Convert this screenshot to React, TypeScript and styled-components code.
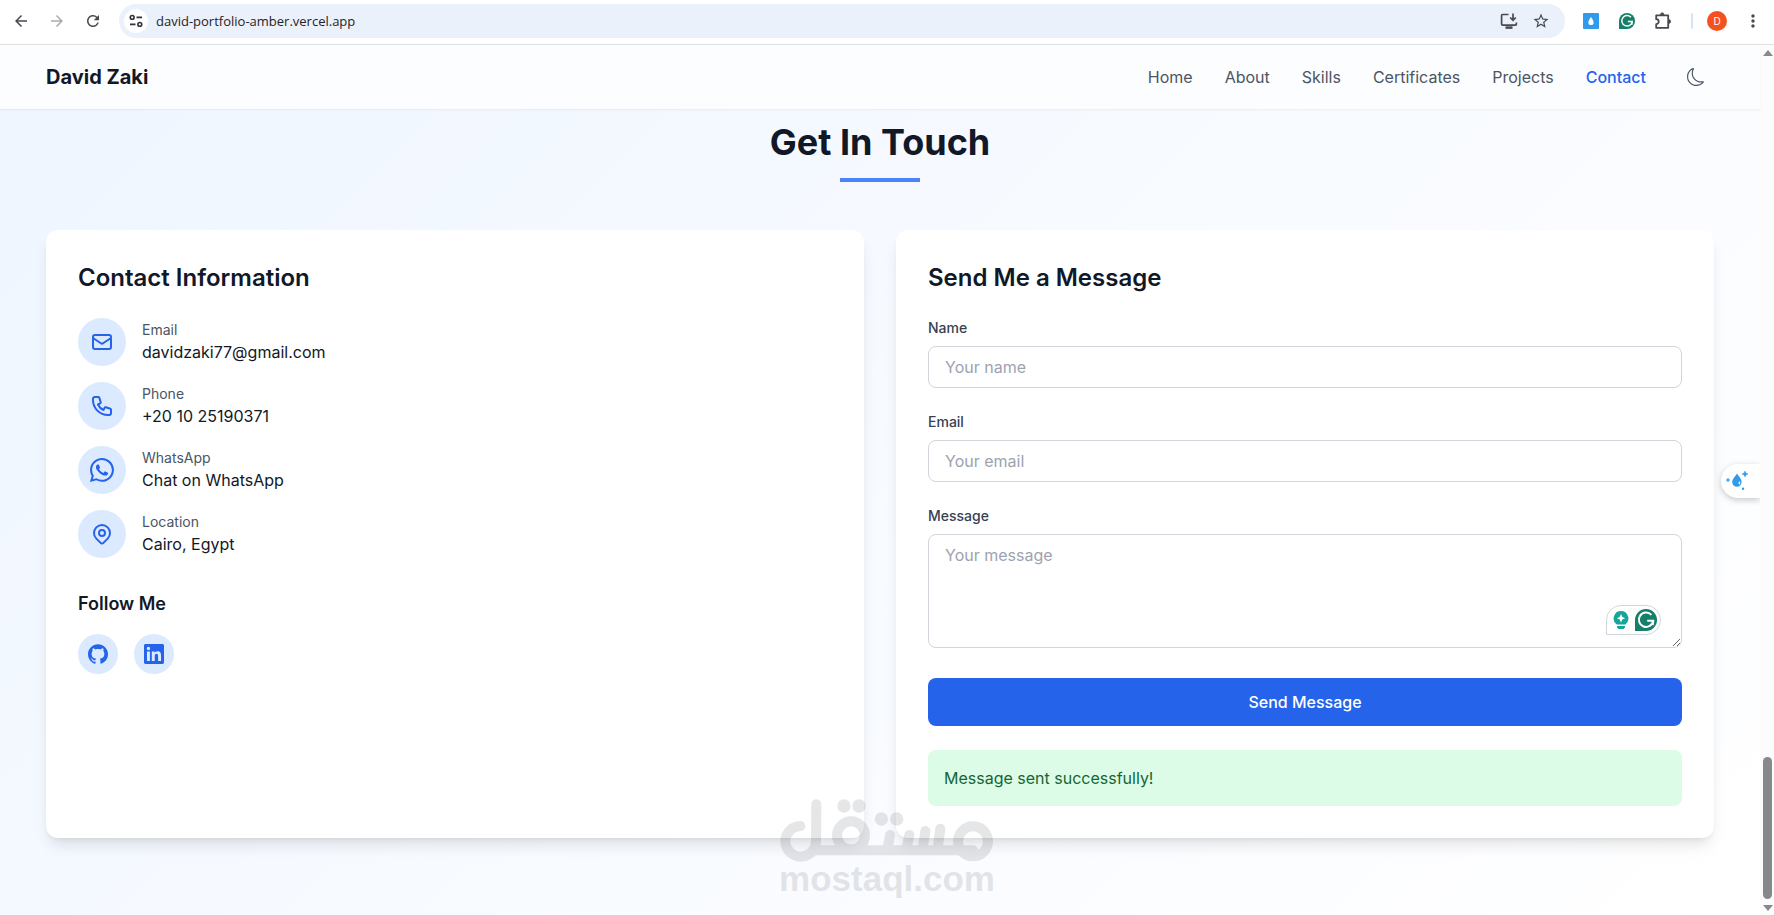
import React from "react";
import styled, { createGlobalStyle } from "styled-components";
import { HiOutlineMail, HiOutlinePhone, HiOutlineLocationMarker } from "react-icons/hi";
import { BsMoon, BsWhatsapp } from "react-icons/bs";
import {
  MdArrowBack,
  MdArrowForward,
  MdRefresh,
  MdStarBorder,
  MdMoreVert,
} from "react-icons/md";

const GlobalStyle = createGlobalStyle`
  *, *::before, *::after { box-sizing: border-box; }
  body { margin: 0; font-family: Inter, "Liberation Sans", sans-serif; color: #111827; }
  h1, h2, h3, p, ul, dl, dd { margin: 0; padding: 0; font-weight: inherit; }
  ul { list-style: none; }
  a { color: inherit; text-decoration: none; }
  button, input, textarea { font: inherit; }
  button { border: 0; padding: 0; background: none; cursor: pointer; color: inherit; }
  svg { display: block; }
`;

const Browser = styled.div`
  position: relative;
  display: flex;
  flex-direction: column;
  min-height: 100vh;
  background: #fff;
  overflow: hidden;
`;

const Toolbar = styled.header`
  display: flex;
  align-items: center;
  height: 45px;
  padding: 0 11px 3px 12px;
  border-bottom: 1px solid #dde1e1;
  background: #fff;
`;

const ToolButtons = styled.div`
  display: flex;
  gap: 18px;
  margin-right: 17px;
`;

const ToolButton = styled.button<{ $muted?: boolean }>`
  color: ${(p) => (p.$muted ? "#a9abb0" : "#474a50")};
`;

const AddressBar = styled.div`
  display: flex;
  flex: 1;
  align-items: center;
  gap: 8px;
  height: 34px;
  padding: 0 15px 0 5px;
  border-radius: 17px;
  background: #ebf1fa;
`;

const SiteInfo = styled.button`
  display: grid;
  place-items: center;
  width: 24px;
  height: 24px;
  border-radius: 50%;
  background: #fff;
`;

const Url = styled.input`
  flex: 1;
  min-width: 0;
  padding: 0;
  border: 0;
  outline: 0;
  background: none;
  color: #1f2329;
  font-family: "Open Sans", "Noto Sans", sans-serif;
  font-size: 13px;
`;

const AddressActions = styled.div`
  display: flex;
  gap: 14px;
`;

const Extensions = styled.div`
  display: flex;
  align-items: center;
  gap: 20px;
  margin: 0 14px 0 18px;
`;

const Divider = styled.span`
  width: 2px;
  height: 16px;
  border-radius: 1px;
  background: #d5e3fa;
`;

const Avatar = styled.button`
  width: 20px;
  height: 20px;
  margin-right: 16px;
  border-radius: 50%;
  background: #f4511e;
  color: #fff;
  font-size: 10px;
  line-height: 20px;
`;

const Viewport = styled.div`
  display: flex;
  flex: 1;
`;

const Page = styled.div`
  position: relative;
  display: flex;
  flex: 1;
  flex-direction: column;
  min-width: 0;
`;

const Nav = styled.nav`
  display: flex;
  align-items: center;
  justify-content: space-between;
  height: 64px;
  padding: 0 46px;
  background: #fcfdff;
  box-shadow: 0 1px 2px rgba(0, 0, 0, 0.06);
  z-index: 1;
`;

const Brand = styled.a`
  font-size: 20px;
  font-weight: 700;
  line-height: 28px;
`;

const NavLinks = styled.ul`
  display: flex;
  align-items: center;
  gap: 32px;
`;

const NavLink = styled.a<{ $active?: boolean }>`
  color: ${(p) => (p.$active ? "#2563eb" : "#4b5563")};
  font-weight: ${(p) => (p.$active ? 500 : 400)};
  line-height: 24px;
`;

const ThemeToggle = styled.button`
  padding: 9px;
  color: #4b5563;
`;

const ContactSection = styled.main`
  flex: 1;
  padding: 13px 46px 64px;
  background: linear-gradient(135deg, #eff6ff 0%, #fafcff 65%, #ffffff 100%);
`;

const SectionTitle = styled.h1`
  font-size: 36px;
  font-weight: 700;
  line-height: 40px;
  text-align: center;
`;

const TitleRule = styled.div`
  width: 80px;
  height: 4px;
  margin: 16px auto 48px;
  background: #4c84f8;
`;

const Columns = styled.div`
  display: grid;
  grid-template-columns: 1fr 1fr;
  gap: 32px;
`;

const Card = styled.section`
  padding: 32px;
  border-radius: 12px;
  background: #fff;
  box-shadow: 0 10px 15px -3px rgba(0, 0, 0, 0.1), 0 4px 6px -4px rgba(0, 0, 0, 0.1);
`;

const CardTitle = styled.h2`
  margin-bottom: 24px;
  font-size: 24px;
  font-weight: 600;
  line-height: 32px;
`;

const ContactList = styled.ul`
  display: grid;
  gap: 16px;
  margin-bottom: 32px;
`;

const ContactRow = styled.li`
  display: flex;
  align-items: center;
  gap: 16px;
`;

const IconDisc = styled.span`
  display: grid;
  place-items: center;
  width: 48px;
  height: 48px;
  border-radius: 50%;
  background: #dbeafe;
  color: #2563eb;
`;

const ContactLabel = styled.p`
  color: #4b5563;
  font-size: 14px;
  line-height: 20px;
`;

const ContactValue = styled.p`
  line-height: 24px;
`;

const FollowTitle = styled.h3`
  margin-bottom: 16px;
  font-size: 18px;
  font-weight: 600;
  line-height: 28px;
`;

const SocialLinks = styled.div`
  display: flex;
  gap: 16px;
`;

const SocialLink = styled.a`
  display: grid;
  place-items: center;
  width: 40px;
  height: 40px;
  border-radius: 50%;
  background: #dbeafe;
  color: #2563eb;
`;

const Form = styled.form`
  display: grid;
  gap: 24px;
`;

const Field = styled.div`
  position: relative;
`;

const FieldLabel = styled.label`
  display: block;
  margin-bottom: 8px;
  color: #374151;
  font-size: 14px;
  font-weight: 500;
  line-height: 20px;
`;

const TextInput = styled.input`
  display: block;
  width: 100%;
  height: 42px;
  padding: 8px 16px;
  border: 1px solid #d1d5db;
  border-radius: 8px;
  background: #fff;
  line-height: 24px;
  &::placeholder { color: #9ca3af; opacity: 1; }
`;

const TextArea = styled.textarea`
  display: block;
  width: 100%;
  height: 114px;
  margin-bottom: 6px;
  padding: 8px 16px;
  border: 1px solid #d1d5db;
  border-radius: 8px;
  background: #fff;
  line-height: 24px;
  resize: vertical;
  &::placeholder { color: #9ca3af; opacity: 1; }
`;

const SubmitButton = styled.button`
  height: 48px;
  border-radius: 8px;
  background: #2563eb;
  color: #fff;
  font-weight: 500;
  line-height: 24px;
`;

const SuccessNote = styled.p`
  padding: 16px;
  border-radius: 8px;
  background: #dcfce7;
  color: #166534;
  line-height: 24px;
`;

const WritingAssistant = styled.div`
  position: absolute;
  right: 21px;
  bottom: 19px;
  display: flex;
  align-items: center;
  gap: 6px;
  height: 30px;
  padding: 0 3px 0 6px;
  border: 1px solid #d1d5db;
  border-radius: 15px 15px 15px 0;
  background: #fff;
`;

const SideTab = styled.button`
  position: absolute;
  top: 419px;
  right: 0;
  width: 39px;
  height: 34px;
  padding: 0 0 0 4px;
  border-radius: 17px 0 0 17px;
  background: #fff;
  box-shadow: 0 2px 6px rgba(0, 0, 0, 0.22);
  clip-path: inset(-10px 0 -12px -10px);
`;

const ScrollTrack = styled.div`
  display: flex;
  flex-direction: column;
  align-items: center;
  justify-content: space-between;
  width: 14px;
  padding: 5px 0 4px 1px;
  background: #fcfcfc;
`;

const ScrollEnd = styled.div`
  display: grid;
  justify-items: center;
  gap: 6px;
`;

const ScrollThumb = styled.div`
  width: 9px;
  height: 142px;
  border-radius: 5px;
  background: #87888a;
`;

const Watermark = styled.div`
  position: absolute;
  inset: 0;
  z-index: 2;
  display: flex;
  flex-direction: column;
  align-items: center;
  justify-content: flex-end;
  padding-bottom: 19px;
  opacity: 0.1;
  color: #101420;
  pointer-events: none;
`;

const WatermarkText = styled.span`
  font-family: "Liberation Sans", Arial, sans-serif;
  font-size: 35px;
  font-weight: 700;
  line-height: 34px;
`;

const SiteInfoIcon = () => (
  <svg width="14" height="14" viewBox="0 0 14 14" fill="none" stroke="#303338" strokeWidth="1.6">
    <circle cx="3.2" cy="3.4" r="1.9" />
    <path d="M7.5 3.4H13M1 10.4h5.5" />
    <circle cx="10.8" cy="10.4" r="1.9" />
  </svg>
);

const InstallIcon = () => (
  <svg width="18" height="18" viewBox="0 0 18 18" fill="none" stroke="#474a50" strokeWidth="1.7">
    <path d="M8.5 2.5H2.6q-1 0-1 1v8.6q0 1 1 1h12.8q1 0 1-1V10.500" />
    <path d="M13 1.500v6.500M10.200 5.500L13 8.300l2.800-2.800" />
    <path d="M5.500 15.600h7" strokeWidth="2.500" />
  </svg>
);

const DropIcon = () => (
  <svg width="16" height="16" viewBox="0 0 16 16">
    <rect width="16" height="16" rx="1" fill="#2f9bea" />
    <path d="M8 4c1 1.800 2.600 3.300 2.600 5.400a2.600 2.600 0 0 1-5.200 0C5.400 7.300 7 5.800 8 4z" fill="#fff" />
  </svg>
);

const PuzzleIcon = () => (
  <svg width="16" height="18" viewBox="0 0 16 18" fill="none" stroke="#474a50" strokeWidth="1.8" strokeLinejoin="round">
    <path d="M1.200 3.300H13.200V15.800H1.200V12.200a2.500 2.500 0 0 0 0-5z" />
    <path d="M5.500 2.600a1.700 1.700 0 0 1 3.400 0zM13.900 7.800a1.700 1.700 0 0 1 0 3.400z" fill="#474a50" strokeWidth="1" />
  </svg>
);

const GrammarIcon = ({ size }: { size: number }) => (
  <svg width={size} height={size} viewBox="0 0 22 22">
    <path d="M11 0a11 11 0 1 1 0 22H0V11A11 11 0 0 1 11 0z" fill="#15806a" />
    <path
      d="M16.400 5.900A7.200 7.200 0 1 0 18.200 11.800H12.200M18.300 11.800l-.6 4.200"
      fill="none"
      stroke="#fff"
      strokeWidth="2"
    />
  </svg>
);

const BulbIcon = () => (
  <svg width="16" height="20" viewBox="0 0 16 20" fill="#15a599">
    <path d="M8 1a7.400 7.400 0 0 1 4.300 13.400H3.700A7.400 7.400 0 0 1 8 1zM4 16h8v1.500L10.500 19h-5L4 17.500z" />
    <path d="M8 4l1.300 2.900L12.200 8.200 9.300 9.500 8 12.400 6.700 9.500 3.800 8.200l2.900-1.300z" fill="#fff" />
  </svg>
);

const SparkDropIcon = () => (
  <svg width="24" height="22" viewBox="0 0 24 22" fill="#2f9bea">
    <path d="M12 3.500c1.500 2.800 4.600 5.200 4.600 8.600a4.700 4.700 0 0 1-9.400 0c0-3.400 3.400-5.800 4.800-8.600z" />
    <path d="M20 1l.9 2.100L23 4l-2.100.9L20 7l-.9-2.100L17 4l2.100-.9zM3 8l.6 1.400L5 10l-1.400.6L3 12l-.6-1.400L1 10l1.400-.6z" stroke="#2f9bea" strokeWidth=".5" />
    <circle cx="18" cy="18.800" r="1.200" />
    <ellipse cx="14.400" cy="13" rx=".8" ry="1.400" fill="#fff" />
  </svg>
);

const GithubIcon = () => (
  <svg width="20" height="20" viewBox="0 0 24 24" fill="currentColor">
    <path d="M12 .297c-6.630 0-12 5.373-12 12 0 5.303 3.438 9.800 8.205 11.385.6.113.820-.258.820-.577 0-.285-.010-1.040-.015-2.040-3.338.724-4.042-1.610-4.042-1.610C4.422 18.070 3.633 17.700 3.633 17.700c-1.087-.744.084-.729.084-.729 1.205.084 1.838 1.236 1.838 1.236 1.070 1.835 2.809 1.305 3.495.998.108-.776.417-1.305.760-1.605-2.665-.3-5.466-1.332-5.466-5.930 0-1.310.465-2.380 1.235-3.220-.135-.303-.540-1.523.105-3.176 0 0 1.005-.322 3.300 1.230.960-.267 1.980-.399 3-.405 1.020.006 2.040.138 3 .405 2.280-1.552 3.285-1.230 3.285-1.230.645 1.653.240 2.873.120 3.176.765.840 1.230 1.910 1.230 3.220 0 4.610-2.805 5.625-5.475 5.920.420.360.810 1.096.810 2.220 0 1.606-.015 2.896-.015 3.286 0 .315.210.690.825.570C20.565 22.092 24 17.592 24 12.297c0-6.627-5.373-12-12-12" />
  </svg>
);

const LinkedinIcon = () => (
  <svg width="20" height="20" viewBox="0 0 24 24" fill="currentColor">
    <path d="M20.447 20.452h-3.554v-5.569c0-1.328-.027-3.037-1.852-3.037-1.853 0-2.136 1.445-2.136 2.939v5.667H9.351V9h3.414v1.561h.046c.477-.9 1.637-1.850 3.370-1.850 3.601 0 4.267 2.370 4.267 5.455v6.286zM5.337 7.433a2.062 2.062 0 0 1-2.063-2.065 2.064 2.064 0 1 1 2.063 2.065zm1.782 13.019H3.555V9h3.564v11.452zM22.225 0H1.771C.792 0 0 .774 0 1.729v20.542C0 23.227.792 24 1.771 24h20.451C23.200 24 24 23.227 24 22.271V1.729C24 .774 23.200 0 22.222 0h.003z" />
  </svg>
);

const Triangle = ({ down }: { down?: boolean }) => (
  <svg width="10" height="6" viewBox="0 0 10 6" fill="#87888a">
    <path d={down ? "M0 0h10L5 6z" : "M0 6h10L5 0z"} />
  </svg>
);

const WatermarkLogo = () => (
  <svg width="214" height="63" viewBox="119 56 642 189" fill="none" stroke="currentColor" strokeWidth="30" strokeLinecap="round">
    <path d="M180 137A46 46 0 1 0 227 183L228 72M224 210H698" />
    <circle cx="332" cy="165" r="42" />
    <circle cx="698" cy="183" r="45" />
    <path d="M449 164L442 205M507 164L498 205M555 152L547 205M600 145L592 205" />
    <g fill="currentColor" stroke="none">
      <circle cx="311" cy="77" r="20" />
      <circle cx="356" cy="77" r="20" />
      <circle cx="423" cy="116" r="20" />
      <circle cx="469" cy="116" r="20" />
    </g>
  </svg>
);

const links = ["Home", "About", "Skills", "Certificates", "Projects", "Contact"];

const contacts = [
  { label: "Email", value: "davidzaki77@gmail.com", href: "mailto:davidzaki77@gmail.com", Icon: HiOutlineMail },
  { label: "Phone", value: "+20 10 25190371", href: "tel:+201025190371", Icon: HiOutlinePhone },
  { label: "WhatsApp", value: "Chat on WhatsApp", href: "#whatsapp", Icon: BsWhatsapp },
  { label: "Location", value: "Cairo, Egypt", href: "", Icon: HiOutlineLocationMarker },
];

export default function App() {
  return (
    <Browser>
      <GlobalStyle />
      <Toolbar>
        <ToolButtons>
          <ToolButton aria-label="Back"><MdArrowBack size={18} /></ToolButton>
          <ToolButton aria-label="Forward" $muted><MdArrowForward size={18} /></ToolButton>
          <ToolButton aria-label="Reload"><MdRefresh size={18} /></ToolButton>
        </ToolButtons>
        <AddressBar>
          <SiteInfo aria-label="Site information"><SiteInfoIcon /></SiteInfo>
          <Url aria-label="Address" defaultValue="david-portfolio-amber.vercel.app" />
          <AddressActions>
            <ToolButton aria-label="Install"><InstallIcon /></ToolButton>
            <ToolButton aria-label="Bookmark"><MdStarBorder size={18} /></ToolButton>
          </AddressActions>
        </AddressBar>
        <Extensions>
          <ToolButton aria-label="Drop extension"><DropIcon /></ToolButton>
          <ToolButton aria-label="Grammar extension"><GrammarIcon size={16} /></ToolButton>
          <ToolButton aria-label="Extensions"><PuzzleIcon /></ToolButton>
          <Divider />
        </Extensions>
        <Avatar aria-label="Profile">D</Avatar>
        <ToolButton aria-label="Menu"><MdMoreVert size={20} /></ToolButton>
      </Toolbar>

      <Viewport>
        <Page>
          <Nav>
            <Brand href="#home">David Zaki</Brand>
            <NavLinks>
              {links.map((name) => (
                <li key={name}>
                  <NavLink href={`#${name.toLowerCase()}`} $active={name === "Contact"}>{name}</NavLink>
                </li>
              ))}
              <li><ThemeToggle aria-label="Dark mode"><BsMoon size={18} /></ThemeToggle></li>
            </NavLinks>
          </Nav>

          <ContactSection>
            <SectionTitle>Get In Touch</SectionTitle>
            <TitleRule />
            <Columns>
              <Card>
                <CardTitle>Contact Information</CardTitle>
                <ContactList>
                  {contacts.map(({ label, value, href, Icon }) => (
                    <ContactRow key={label}>
                      <IconDisc><Icon size={24} /></IconDisc>
                      <div>
                        <ContactLabel>{label}</ContactLabel>
                        <ContactValue>{href ? <a href={href}>{value}</a> : value}</ContactValue>
                      </div>
                    </ContactRow>
                  ))}
                </ContactList>
                <FollowTitle>Follow Me</FollowTitle>
                <SocialLinks>
                  <SocialLink href="#github" aria-label="GitHub"><GithubIcon /></SocialLink>
                  <SocialLink href="#linkedin" aria-label="LinkedIn"><LinkedinIcon /></SocialLink>
                </SocialLinks>
              </Card>

              <Card>
                <CardTitle>Send Me a Message</CardTitle>
                <Form onSubmit={(e: React.FormEvent) => e.preventDefault()}>
                  <Field>
                    <FieldLabel htmlFor="name">Name</FieldLabel>
                    <TextInput id="name" placeholder="Your name" />
                  </Field>
                  <Field>
                    <FieldLabel htmlFor="email">Email</FieldLabel>
                    <TextInput id="email" type="email" placeholder="Your email" />
                  </Field>
                  <Field>
                    <FieldLabel htmlFor="message">Message</FieldLabel>
                    <TextArea id="message" placeholder="Your message" />
                    <WritingAssistant>
                      <BulbIcon />
                      <GrammarIcon size={22} />
                    </WritingAssistant>
                  </Field>
                  <SubmitButton type="submit">Send Message</SubmitButton>
                  <SuccessNote role="status">Message sent successfully!</SuccessNote>
                </Form>
              </Card>
            </Columns>
          </ContactSection>
          <SideTab aria-label="Open assistant"><SparkDropIcon /></SideTab>
        </Page>
        <ScrollTrack aria-hidden="true">
          <Triangle />
          <ScrollEnd>
            <ScrollThumb />
            <Triangle down />
          </ScrollEnd>
        </ScrollTrack>
      </Viewport>

      <Watermark aria-hidden="true">
        <WatermarkLogo />
        <WatermarkText>mostaql.com</WatermarkText>
      </Watermark>
    </Browser>
  );
}
